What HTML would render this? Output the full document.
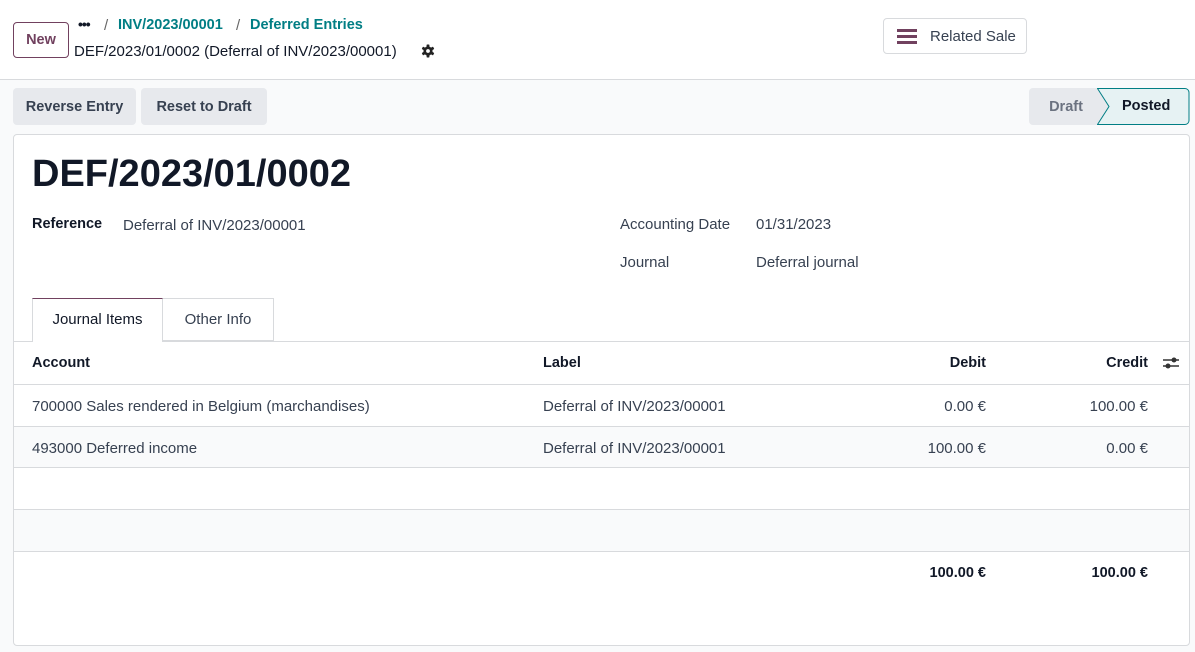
<!DOCTYPE html>
<html><head><style>
*{box-sizing:border-box;margin:0;padding:0}
body{width:1195px;height:652px;background:#f9fafb;font-family:"Liberation Sans",sans-serif;font-size:15px;color:#374151;position:relative;overflow:hidden}
.top{position:absolute;left:0;top:0;width:1195px;height:80px;background:#fff;border-bottom:1px solid #d8dadd}
.abs{position:absolute;white-space:nowrap}
.btn{position:absolute;border-radius:4px;font-weight:bold;font-size:14.5px;display:flex;align-items:center;justify-content:center}
.card{position:absolute;left:13px;top:134px;width:1177px;height:512px;background:#fff;border:1px solid #d8dadd;border-radius:4px;overflow:hidden}
.row{position:absolute;left:0;width:1177px;border-top:1px solid #d8dadd}
.b{font-weight:bold;color:#111827;font-size:14.5px}
</style></head><body>
<div class="top">
<div class="btn" style="left:13px;top:22px;width:56px;height:36px;border:1px solid #71415f;color:#71415f;background:#fff">New</div>
<div class="abs b" style="left:78px;top:16px;font-size:14px;letter-spacing:-1px">•••</div>
<div class="abs" style="left:104px;top:17px;color:#666">/</div>
<div class="abs b" style="left:118px;top:17px;color:#017e84">INV/2023/00001</div>
<div class="abs" style="left:236px;top:17px;color:#666">/</div>
<div class="abs b" style="left:250px;top:17px;color:#017e84">Deferred Entries</div>
<div class="abs" style="left:74px;top:43px;color:#111827">DEF/2023/01/0002 (Deferral of INV/2023/00001)</div>
<svg class="abs" style="left:421px;top:44px" width="14" height="14" viewBox="0 0 14 14"><g fill="#222"><circle cx="7" cy="7" r="4.6"/><rect x="5.6" y="0.5" width="2.8" height="13" rx="0.6"/><rect x="5.6" y="0.5" width="2.8" height="13" rx="0.6" transform="rotate(60 7 7)"/><rect x="5.6" y="0.5" width="2.8" height="13" rx="0.6" transform="rotate(120 7 7)"/></g><circle cx="7" cy="7" r="1.9" fill="#fff"/></svg>
<div class="btn" style="left:883px;top:18px;width:144px;height:36px;border:1px solid #d8dadd;background:#fff;font-weight:normal;justify-content:flex-start;padding-left:13px">
<svg width="20" height="16" viewBox="0 0 20 16"><rect y="1" width="20" height="3" fill="#71415f"/><rect y="7" width="20" height="3" fill="#71415f"/><rect y="13" width="20" height="3" fill="#71415f"/></svg>
<span style="margin-left:13px;color:#374151;font-size:15px">Related Sale</span></div>
</div>
<div class="btn" style="left:13px;top:88px;width:123px;height:37px;background:#e7e9ed">Reverse Entry</div>
<div class="btn" style="left:141px;top:88px;width:126px;height:37px;background:#e7e9ed">Reset to Draft</div>
<div class="btn" style="left:1029px;top:88px;width:80px;height:37px;background:#e7e9ed;color:#6b7280;border-radius:4px 0 0 4px;padding-right:6px">Draft</div>
<svg class="abs" style="left:1097px;top:88px" width="93" height="37"><path d="M0.5 0.5 H88 a4 4 0 0 1 4 4 V32.5 a4 4 0 0 1 -4 4 H0.5 L12 18.5 Z" fill="#e6f2f3" stroke="#017e84"/></svg>
<div class="abs b" style="left:1122px;top:98px">Posted</div>
<div class="card">
<div class="abs b" style="left:18px;top:18px;font-size:38px">DEF/2023/01/0002</div>
<div class="abs b" style="left:18px;top:81px">Reference</div>
<div class="abs" style="left:109px;top:82px">Deferral of INV/2023/00001</div>
<div class="abs" style="left:606px;top:81px">Accounting Date</div>
<div class="abs" style="left:742px;top:81px">01/31/2023</div>
<div class="abs" style="left:606px;top:119px">Journal</div>
<div class="abs" style="left:742px;top:119px">Deferral journal</div>
<div class="abs" style="left:18px;top:163px;width:131px;height:44px;border:1px solid #d8dadd;border-top:1px solid #71415f;border-bottom:none;background:#fff;z-index:2;text-align:center;line-height:42px;color:#111827">Journal Items</div>
<div class="abs" style="left:149px;top:163px;width:111px;height:43px;border:1px solid #d8dadd;border-left:none;text-align:center;line-height:42px">Other Info</div>
<div class="row" style="top:206px;height:44px"></div>
<div class="abs b" style="left:18px;top:220px">Account</div>
<div class="abs b" style="left:529px;top:220px">Label</div>
<div class="abs b" style="right:203px;top:220px">Debit</div>
<div class="abs b" style="right:41px;top:220px">Credit</div>
<svg class="abs" style="left:1148px;top:220px" width="18" height="16"><path d="M1 5H17M1 11H17" stroke="#333" stroke-width="1.5"/><circle cx="12" cy="5" r="2.5" fill="#333"/><circle cx="6" cy="11" r="2.5" fill="#333"/></svg>
<div class="row" style="top:249px;height:43px"></div>
<div class="abs" style="left:18px;top:263px">700000 Sales rendered in Belgium (marchandises)</div>
<div class="abs" style="left:529px;top:263px">Deferral of INV/2023/00001</div>
<div class="abs" style="right:203px;top:263px">0.00 €</div>
<div class="abs" style="right:41px;top:263px">100.00 €</div>
<div class="row" style="top:291px;height:42px;background:#f9fafb"></div>
<div class="abs" style="left:18px;top:305px">493000 Deferred income</div>
<div class="abs" style="left:529px;top:305px">Deferral of INV/2023/00001</div>
<div class="abs" style="right:203px;top:305px">100.00 €</div>
<div class="abs" style="right:41px;top:305px">0.00 €</div>
<div class="row" style="top:332px;height:42px"></div>
<div class="row" style="top:374px;height:42px;background:#f9fafb"></div>
<div class="row" style="top:416px;height:100px"></div>
<div class="abs b" style="right:203px;top:430px">100.00 €</div>
<div class="abs b" style="right:41px;top:430px">100.00 €</div>
</div>
</body></html>
